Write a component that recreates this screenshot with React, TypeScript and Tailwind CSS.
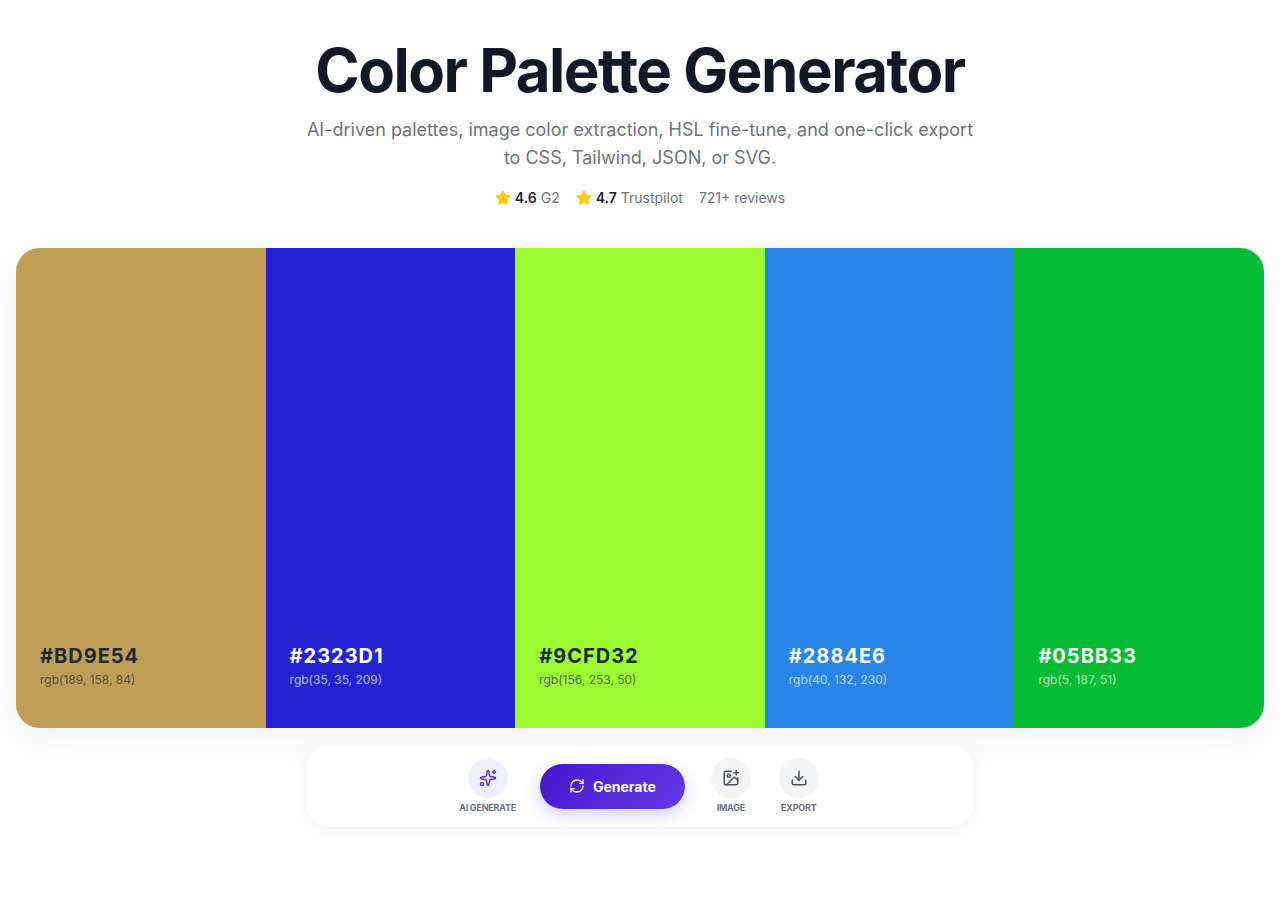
import { Download, ImagePlus, RefreshCw, Sparkles, Star, type LucideIcon } from "lucide-react";

interface Swatch {
  hex: string;
  rgb: string;
  bg: string;
  dark?: boolean;
}

const swatches: Swatch[] = [
  { hex: "#BD9E54", rgb: "rgb(189, 158, 84)", bg: "bg-[#bd9e54]", dark: true },
  { hex: "#2323D1", rgb: "rgb(35, 35, 209)", bg: "bg-[#2323d1]" },
  { hex: "#9CFD32", rgb: "rgb(156, 253, 50)", bg: "bg-[#9cfd32]", dark: true },
  { hex: "#2884E6", rgb: "rgb(40, 132, 230)", bg: "bg-[#2884e6]" },
  { hex: "#05BB33", rgb: "rgb(5, 187, 51)", bg: "bg-[#05bb33]" },
];

const Rating: React.FC<{ score: string; source: string }> = ({ score, source }) => (
  <span className="flex items-center gap-1">
    <Star size={16} className="fill-[#facc15] text-[#facc15]" />
    <strong className="font-semibold text-[#1f2430]">{score}</strong>
    <span>{source}</span>
  </span>
);

const ToolButton: React.FC<{ icon: LucideIcon; label: string; accent?: boolean }> = ({
  icon: Icon,
  label,
  accent,
}) => (
  <button type="button" className="flex min-w-11 flex-col items-center gap-1">
    <span
      className={`flex size-10 items-center justify-center rounded-full ${
        accent ? "bg-[#eef0ff] text-[#5b34dc]" : "bg-[#f3f4f6] text-[#4b5563]"
      }`}
    >
      <Icon size={18} />
    </span>
    <span className="text-[9px] leading-3 font-bold tracking-tight text-[#6b7280] uppercase">
      {label}
    </span>
  </button>
);

const App: React.FC = () => {
  return (
    <main className="min-h-screen bg-white px-4 pt-10 pb-20 font-['Inter',sans-serif]">
      {/* Header */}
      <header className="mx-auto flex max-w-[672px] flex-col items-center text-center">
        <h1 className="text-6xl font-bold tracking-tight whitespace-nowrap text-[#111827]">
          Color Palette Generator
        </h1>
        <p className="mt-4 text-lg leading-7 text-[#6f737c]">
          AI-driven palettes, image color extraction, HSL fine-tune, and one-click export to CSS,
          Tailwind, JSON, or SVG.
        </p>
        <div className="mt-4 flex items-center gap-4 text-sm text-[#6f737c]">
          <Rating score="4.6" source="G2" />
          <Rating score="4.7" source="Trustpilot" />
          <span>721+ reviews</span>
        </div>
      </header>

      {/* Palette */}
      <section className="mt-10 grid h-[480px] grid-cols-5 overflow-hidden rounded-3xl shadow-[0_10px_40px_rgba(0,0,0,0.06)]">
        {swatches.map((s) => (
          <div key={s.hex} className={`flex flex-col justify-end px-6 pb-10 ${s.bg}`}>
            <h2
              className={`text-xl leading-6 font-bold tracking-wider ${
                s.dark ? "text-gray-800" : "text-white"
              }`}
            >
              {s.hex}
            </h2>
            <p
              className={`mt-1 text-xs leading-4 ${
                s.dark ? "text-gray-800/70" : "text-white/70"
              }`}
            >
              {s.rgb}
            </p>
          </div>
        ))}
      </section>

      {/* Toolbar */}
      <div className="relative mx-auto mt-4 flex max-w-[670px] items-center justify-center gap-6 rounded-3xl border border-black/3 bg-white py-[13px] shadow-[0_4px_20px_rgba(0,0,0,0.04)]">
        <ToolButton icon={Sparkles} label="AI Generate" accent />
        <button
          type="button"
          className="flex items-center gap-2 rounded-full bg-linear-135 from-[#4513cb] to-[#6339e8] px-[29px] py-3 text-sm leading-[21px] font-bold text-white shadow-[0_6px_16px_rgba(99,102,241,0.3)]"
        >
          <RefreshCw size={16} />
          Generate
        </button>
        <ToolButton icon={ImagePlus} label="Image" />
        <ToolButton icon={Download} label="Export" />
      </div>
    </main>
  );
};

export default App;
